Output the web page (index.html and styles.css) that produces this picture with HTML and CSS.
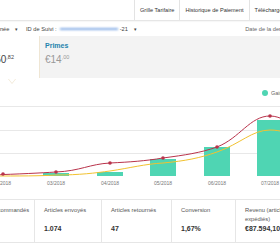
FILE: index.html
```html
<!DOCTYPE html>
<html>
<head>
  <title>Rapports</title>
  <link rel="stylesheet" href="styles.css">
</head>
<body>
  <div class="topbar">
    <div class="tabs">
      <div class="tab">Grille Tarifaire</div>
      <div class="tab">Historique de Paiement</div>
      <div class="tab">Téléchargement</div>
    </div>
  </div>

  <div class="filters">
    <span class="filter year">Année <span class="caret">▾</span></span>
    <span class="filter">ID de Suivi : <span class="blurred"></span><span class="tag-end">-21</span> <span class="caret">▾</span></span>
    <span class="updated">Date de la dernière mise à jour</span>
  </div>

  <div class="summary">
    <div class="summary-card active">
      <div class="summary-label">Revenus</div>
      <div class="summary-value right">€1.250<sup>,82</sup></div>
    </div>
    <div class="summary-card">
      <div class="summary-label primes">Primes</div>
      <div class="summary-value muted">€14<sup>,00</sup></div>
    </div>
  </div>

  <div class="chart">
    <svg width="280" height="118" viewBox="0 0 280 118">
      <g stroke="#e8e8e8" stroke-width="1">
        <line x1="0" y1="28.5" x2="280" y2="28.5"/>
        <line x1="0" y1="52.5" x2="280" y2="52.5"/>
        <line x1="0" y1="75.5" x2="280" y2="75.5"/>
      </g>
      <circle cx="265" cy="15" r="3" fill="#4fd5b3"/>
      <text x="271" y="17" class="legend">Gains</text>
      <g fill="#4fd5b3">
        <rect x="43" y="95" width="26" height="3"/>
        <rect x="97" y="94" width="26" height="4"/>
        <rect x="150" y="81" width="26" height="17"/>
        <rect x="204" y="69" width="26" height="29"/>
        <rect x="257" y="42" width="26" height="56"/>
      </g>
      <path d="M-10,98 C20,98 40,98 56,97 C80,97 95,95 110,93 C130,90 145,86 163,85 C185,83 200,80 217,74 C240,66 252,52 270,52 C276,52 280,53 285,54" fill="none" stroke="#f2c230" stroke-width="1"/>
      <path d="M-10,97 C20,96 40,95 56,94 C80,93 90,86 110,85 C130,84 145,83 163,80 C185,77 200,75 217,69 C240,60 250,38 270,38 C276,38 280,40 285,42" fill="none" stroke="#b9334b" stroke-width="1"/>
      <g fill="#b9334b">
        <circle cx="3" cy="96" r="1.8"/>
        <circle cx="56" cy="94" r="1.8"/>
        <circle cx="110" cy="85" r="1.8"/>
        <circle cx="163" cy="80" r="1.8"/>
        <circle cx="217" cy="69" r="1.8"/>
        <circle cx="270" cy="38" r="1.8"/>
      </g>
      <g class="axis" text-anchor="middle">
        <text x="2" y="107">02/2018</text>
        <text x="56" y="107">03/2018</text>
        <text x="110" y="107">04/2018</text>
        <text x="163" y="107">05/2018</text>
        <text x="217" y="107">06/2018</text>
        <text x="270" y="107">07/2018</text>
      </g>
    </svg>
  </div>

  <div class="stats">
    <div class="stat">
      <div class="stat-title">Articles commandés</div>
      <div class="stat-value">1.121</div>
    </div>
    <div class="stat">
      <div class="stat-title">Articles envoyés</div>
      <div class="stat-value">1.074</div>
    </div>
    <div class="stat mid">
      <div class="stat-title">Articles retournés</div>
      <div class="stat-value">47</div>
    </div>
    <div class="stat short">
      <div class="stat-title">Conversion</div>
      <div class="stat-value">1,67%</div>
    </div>
    <div class="stat wide">
      <div class="stat-title">Revenu (articles expédiés)</div>
      <div class="stat-value">€87.594,10</div>
    </div>
  </div>
</body>
</html>
```

FILE: styles.css
```css
body {
  margin: 0;
  width: 280px;
  height: 245px;
  overflow: hidden;
  font-family: "Liberation Sans", Arial, sans-serif;
  color: #555;
  background-color: #fff;
}

.topbar {
  height: 20px;
  border-bottom: 1px solid #e6e6e6;
  box-shadow: 0 1px 1px rgba(0, 0, 0, 0.03);
  white-space: nowrap;
}

.tabs {
  display: flex;
  margin-left: 134px;
  height: 20px;
}

.tab {
  flex: none;
  padding: 0 5px;
  line-height: 20px;
  font-size: 5.6px;
  color: #333;
  border-left: 1px solid #e3e3e3;
}

.filters {
  display: flex;
  align-items: center;
  height: 15px;
  font-size: 5.7px;
  color: #444;
  white-space: nowrap;
}

.filter {
  display: flex;
  align-items: center;
}

.year {
  margin-left: -7px;
  width: 33px;
}

.caret {
  margin-left: 6px;
  font-size: 5px;
}

.blurred {
  display: inline-block;
  width: 58px;
  height: 2px;
  margin-left: 3px;
  background-color: #86aee6;
  filter: blur(0.8px);
}

.tag-end {
  margin-left: 2px;
}

.updated {
  margin-left: auto;
  margin-right: -43px;
  color: #666;
}

.summary {
  display: flex;
  height: 42px;
  background-color: #f3f3f3;
}

.summary-card {
  padding: 6px 0 0 5px;
  width: 120px;
}

.summary-card.active {
  position: relative;
  margin-left: -50px;
  width: 90px;
  padding: 6px 25px 0 7px;
  box-sizing: border-box;
  background-color: #fff;
  border-right: 1px solid #efe6d4;
}

.summary-card.active::after {
  content: "";
  position: absolute;
  left: 58px;
  bottom: -5px;
  width: 0;
  height: 0;
  border-left: 4px solid transparent;
  border-right: 4px solid transparent;
  border-top: 5px solid #fff;
  filter: drop-shadow(0 1px 0 #f0e6d2);
}

.summary-label {
  font-size: 7px;
  font-weight: bold;
  color: #333;
  height: 9px;
}

.summary-label.primes {
  color: #2484ad;
}

.summary-value {
  margin-top: 3px;
  font-size: 10px;
  color: #444;
}

.summary-value.right {
  text-align: right;
}

.summary-value.muted {
  color: #999;
}

.summary-value sup {
  font-size: 5.5px;
  vertical-align: 4px;
}

.chart {
  height: 118px;
}

.chart svg {
  display: block;
}

.legend {
  font-size: 5.5px;
  fill: #666;
}

.axis {
  font-size: 5px;
  fill: #777;
}

.stats {
  display: flex;
  margin-top: 3px;
  margin-left: -33px;
  height: 42px;
  border-top: 1px solid #e6e6e6;
  border-bottom: 1px solid #e6e6e6;
  white-space: nowrap;
}

.stat {
  flex: none;
  width: 67px;
  box-sizing: border-box;
  padding: 6px 0 0 9px;
  border-left: 1px solid #e6e6e6;
}

.stat.mid {
  width: 70px;
}

.stat.short {
  width: 64px;
}

.stat.wide {
  width: 80px;
  white-space: normal;
  padding-right: 20px;
}

.stat-title {
  height: 19px;
  font-size: 5.8px;
  line-height: 9px;
  color: #555;
}

.stat-value {
  font-size: 7px;
  font-weight: bold;
  color: #333;
}
```
